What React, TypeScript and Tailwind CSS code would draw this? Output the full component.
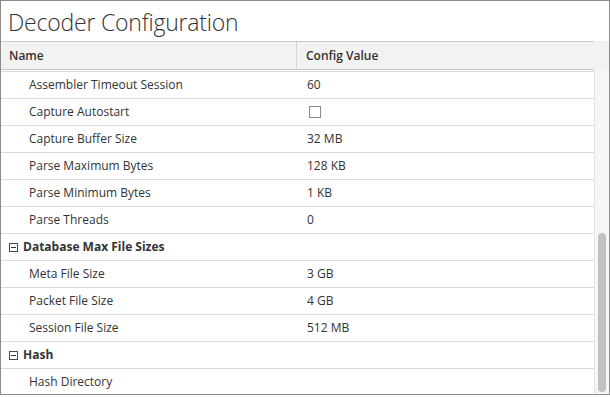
type Row =
  | { kind: "item"; name: string; value?: string; checkbox?: boolean }
  | { kind: "group"; name: string };

const rows: Row[] = [
  { kind: "item", name: "Assembler Timeout Session", value: "60" },
  { kind: "item", name: "Capture Autostart", checkbox: true },
  { kind: "item", name: "Capture Buffer Size", value: "32 MB" },
  { kind: "item", name: "Parse Maximum Bytes", value: "128 KB" },
  { kind: "item", name: "Parse Minimum Bytes", value: "1 KB" },
  { kind: "item", name: "Parse Threads", value: "0" },
  { kind: "group", name: "Database Max File Sizes" },
  { kind: "item", name: "Meta File Size", value: "3 GB" },
  { kind: "item", name: "Packet File Size", value: "4 GB" },
  { kind: "item", name: "Session File Size", value: "512 MB" },
  { kind: "group", name: "Hash" },
  { kind: "item", name: "Hash Directory" },
];

const MinusBox = () => (
  <svg width="9" height="9" viewBox="0 0 9 9" className="shrink-0">
    <rect x="0.5" y="0.5" width="8" height="8" fill="#fff" stroke="#4a4a4a" />
    <line x1="2" y1="4.5" x2="7" y2="4.5" stroke="#333" />
  </svg>
);

const App = () => {
  return (
    <div className="w-[610px] h-[397px] bg-white font-['Open_Sans',sans-serif] text-[#333]">
      <div className="w-[610px] h-[395px] border border-[#8c8c8c] flex flex-col overflow-hidden">
        {/* title */}
        <div className="h-[40px] flex items-center pl-[7px] pt-[2px] shrink-0">
          <span className="text-[23px] font-light leading-none tracking-[-0.2px]">
            Decoder Configuration
          </span>
        </div>

        {/* header */}
        <div className="flex h-[29px] bg-[#f2f2f2] shrink-0">
          <div className="flex w-[593px] border-t border-b border-[#c9c9c9] text-[12px] font-semibold">
            <div className="w-[296px] border-r border-[#d6d6d6] flex items-center pl-[8px]">
              Name
            </div>
            <div className="flex-1 flex items-center pl-[9px]">Config Value</div>
          </div>
          <div className="flex-1" />
        </div>

        {/* body */}
        <div className="flex flex-1 min-h-0">
          <div className="w-[593px] flex flex-col text-[12px] pt-[1px]">
            {rows.map((r, i) =>
              r.kind === "group" ? (
                <div
                  key={i}
                  className="h-[27px] shrink-0 border-t border-[#dcdcdc] flex items-center gap-[5px] pl-[8px] font-bold"
                >
                  <MinusBox />
                  <span>{r.name}</span>
                </div>
              ) : (
                <div
                  key={i}
                  className="h-[27px] shrink-0 border-t border-[#dcdcdc] flex items-center"
                >
                  <div className="w-[297px] pl-[28px]">{r.name}</div>
                  <div className="flex-1 pl-[9px] flex items-center">
                    {r.checkbox ? (
                      <span className="block w-[12px] h-[12px] border border-[#8a8a8a] ml-[2px] bg-white" />
                    ) : (
                      r.value
                    )}
                  </div>
                </div>
              )
            )}
          </div>
          <div className="flex-1 bg-[#f6f6f6] border-l border-[#e3e3e3] flex flex-col justify-end items-center pb-[2px]">
            <div className="w-[8px] h-[159px] rounded-full bg-[#c1c1c1]" />
          </div>
        </div>
      </div>
    </div>
  );
};

export default App;
